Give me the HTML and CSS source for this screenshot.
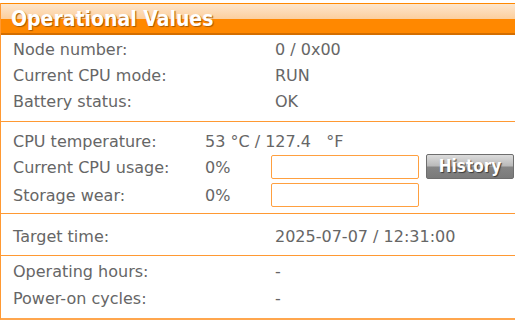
FILE: index.html
```html
<!DOCTYPE html>
<html lang="en">
  <head>
    <meta charset="UTF-8" />
    <title>Operational Values</title>
    <link rel="stylesheet" href="styles.css">
  </head>
  <body>
    <div class="panel">
      <div class="panel-head">Operational Values</div>

      <div class="group group-info">
        <div class="row"><div class="label">Node number:</div><div class="value">0 / 0x00</div></div>
        <div class="row"><div class="label">Current CPU mode:</div><div class="value">RUN</div></div>
        <div class="row"><div class="label">Battery status:</div><div class="value">OK</div></div>
      </div>

      <div class="group group-cpu">
        <div class="row">
          <div class="label">CPU temperature:</div>
          <div class="value">53 °C / 127.4 &nbsp; °F</div>
        </div>
        <div class="row">
          <div class="label">Current CPU usage:</div>
          <div class="value short">0%</div>
          <input class="meter" type="text">
          <button class="btn-history">History</button>
        </div>
        <div class="row">
          <div class="label">Storage wear:</div>
          <div class="value short">0%</div>
          <input class="meter" type="text">
        </div>
      </div>

      <div class="group group-time">
        <div class="row"><div class="label">Target time:</div><div class="value">2025-07-07 / 12:31:00</div></div>
      </div>

      <div class="group group-hours">
        <div class="row"><div class="label">Operating hours:</div><div class="value">-</div></div>
        <div class="row"><div class="label">Power-on cycles:</div><div class="value">-</div></div>
      </div>
    </div>
  </body>
</html>
```

FILE: styles.css
```css
body {
  margin: 0;
  padding-top: 3px;
  font-family: "DejaVu Sans", Verdana, sans-serif;
  font-size: 16px;
  color: #666;
  background: #fff;
}

.panel {
  width: 520px;
  border-left: 1px solid #ff9933;
  border-bottom: 2px solid #ffa64d;
}

.panel-head {
  height: 28px;
  line-height: 28px;
  padding: 1px 0 0 10px;
  border-top: 1px solid #ff8800;
  border-bottom: 2px solid #d46e00;
  background: linear-gradient(#fde6cc 0%, #fccf9e 50%, #ff8800 52%, #ff8800 100%);
  color: #fff;
  font-family: "DejaVu Sans Condensed", "DejaVu Sans", sans-serif;
  font-stretch: condensed;
  font-weight: bold;
  font-size: 21px;
  text-shadow: 1px 1px 1px #a85800;
}

.group {
  border-bottom: 1px solid #ff9933;
}

.group:last-child {
  border-bottom: none;
}

.row {
  display: flex;
  align-items: center;
  padding-left: 12px;
}

.label {
  width: 262px;
}

.group-info {
  padding: 1px 0 7px;
}
.group-info .row { height: 26px; }

.group-cpu {
  padding: 7px 0 4px;
}
.group-cpu .row { height: 28px; }
.group-cpu .row:first-child { height: 24px; }
.group-cpu .label { width: 192px; }
.group-cpu .value.short { width: 66px; }

.meter {
  width: 148px;
  height: 24px;
  box-sizing: border-box;
  border: 1px solid #ffa040;
  border-radius: 2px;
  background: #fff;
  margin: 0;
}

.btn-history {
  margin-left: 7px;
  width: 88px;
  height: 25px;
  margin-top: -2px;
  border: 1px solid #6e6e6e;
  border-radius: 2px;
  background: linear-gradient(#dcdcdc 0%, #b9b9b9 48%, #858585 52%, #7a7a7a 100%);
  color: #fff;
  font-family: "DejaVu Sans Condensed", "DejaVu Sans", sans-serif;
  font-stretch: condensed;
  font-weight: bold;
  font-size: 17px;
  text-shadow: 1px 1px 1px #3a3a3a;
  padding: 0;
}

.group-time {
  padding: 9px 0 6px;
}
.group-time .row { height: 26px; }

.group-hours {
  padding: 2px 0 6px;
}
.group-hours .row { height: 27px; }
```
